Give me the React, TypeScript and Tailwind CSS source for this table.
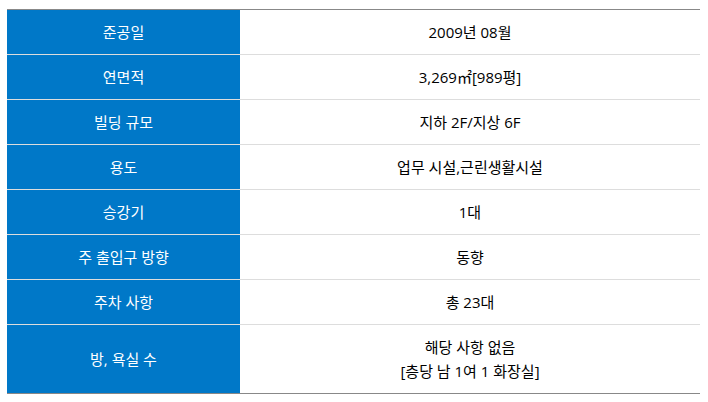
import React from "react";

const rows: { label: string; value: string[] }[] = [
  { label: "준공일", value: ["2009년 08월"] },
  { label: "연면적", value: ["3,269㎡[989평]"] },
  { label: "빌딩 규모", value: ["지하 2F/지상 6F"] },
  { label: "용도", value: ["업무 시설,근린생활시설"] },
  { label: "승강기", value: ["1대"] },
  { label: "주 출입구 방향", value: ["동향"] },
  { label: "주차 사항", value: ["총 23대"] },
  { label: "방, 욕실 수", value: ["해당 사항 없음", "[층당 남 1여 1 화장실]"] },
];

export default function App() {
  return (
    <div
      className="w-[708px] h-[402px] bg-white pt-[9px] pl-[7px]"
      style={{ fontFamily: '"Open Sans", "Noto Sans CJK KR", sans-serif' }}
    >
      <div className="w-[693px] border-t border-b border-[#888888]">
        {rows.map((r, i) => (
          <div
            key={i}
            className={`flex ${i < rows.length - 1 ? "border-b border-[#dddddd]" : ""}`}
          >
            <div className="w-[233px] bg-[#0078c8] text-white text-[15px] leading-[24px] flex items-center justify-center py-[10px]">
              {r.label}
            </div>
            <div className="flex-1 text-[#000000] text-[15px] leading-[24px] flex flex-col items-center justify-center py-[10px]">
              {r.value.map((v, j) => (
                <div key={j}>{v}</div>
              ))}
            </div>
          </div>
        ))}
      </div>
    </div>
  );
}
